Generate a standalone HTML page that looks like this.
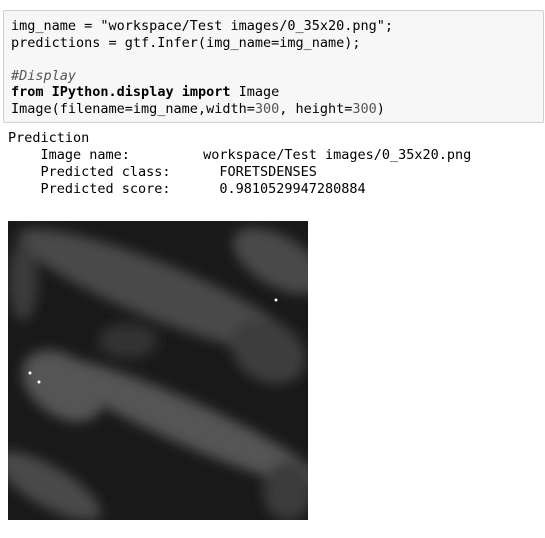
<!DOCTYPE html>
<html><head><style>
body{margin:0;background:#fff;width:545px;height:538px;overflow:hidden;position:relative;font-family:"DejaVu Sans Mono","Liberation Mono",monospace;}
.code{position:absolute;left:3px;top:10px;width:541px;height:113px;background:#f7f7f7;border:1px solid #cfcfcf;border-radius:2px;box-sizing:border-box;}
pre{margin:0;font-family:"DejaVu Sans Mono","Liberation Mono",monospace;font-size:13.5px;line-height:16.6px;color:#000;}
.code pre{position:absolute;left:7px;top:7px;}
.out{position:absolute;left:8px;top:130px;}
.out pre{line-height:17px;font-size:13.5px;}
.k{font-weight:bold;color:#008000}
.c{font-style:italic;color:#408080}
.n{color:#080}
.s{color:#ba2121}
.img{position:absolute;left:8px;top:221px;width:300px;height:299px;background:#191919;overflow:hidden;}
</style></head><body>
<div class="code"><pre>img_name = "workspace/Test images/0_35x20.png";
predictions = gtf.Infer(img_name=img_name);

<span style="font-style:italic;color:#555">#Display</span>
<b>from</b> <b>IPython.display</b> <b>import</b> Image
Image(filename=img_name,width=<span style="color:#555">300</span>, height=<span style="color:#555">300</span>)</pre></div>
<div class="out"><pre>Prediction
    Image name:         workspace/Test images/0_35x20.png
    Predicted class:      FORETSDENSES
    Predicted score:      0.9810529947280884</pre></div>
<div class="img"><svg width="300" height="299" viewBox="0 0 300 299">
<defs><filter id="b"><feGaussianBlur stdDeviation="6"/></filter></defs>
<g filter="url(#b)" fill="#4a4a4a">
<ellipse cx="150" cy="70" rx="150" ry="28" transform="rotate(22 150 70)"/>
<ellipse cx="270" cy="40" rx="50" ry="25" transform="rotate(30 270 40)"/>
<ellipse cx="175" cy="200" rx="150" ry="22" transform="rotate(24 175 200)" fill="#555"/>
<ellipse cx="55" cy="165" rx="45" ry="30" transform="rotate(35 55 165)" fill="#555"/>
<ellipse cx="40" cy="265" rx="60" ry="20" transform="rotate(30 40 265)"/>
<ellipse cx="260" cy="130" rx="40" ry="30" transform="rotate(30 260 130)" fill="#3e3e3e"/>
<ellipse cx="280" cy="270" rx="25" ry="30" fill="#3a3a3a"/>
<ellipse cx="120" cy="120" rx="30" ry="18" fill="#333"/>
<ellipse cx="15" cy="60" rx="15" ry="40" fill="#3a3a3a"/>
</g>
<circle cx="268" cy="79" r="1.5" fill="#fff"/>
<circle cx="22" cy="152" r="1.5" fill="#fff"/>
<circle cx="31" cy="161" r="1.5" fill="#fff"/>
</svg></div>
</body></html>
